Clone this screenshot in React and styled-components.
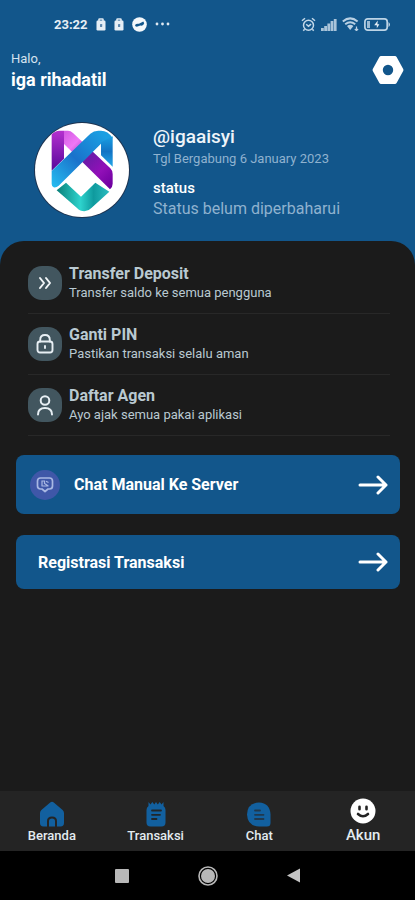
import React from 'react';
import styled, { createGlobalStyle } from 'styled-components';

const menus = [
  { id: 'transfer', title: 'Transfer Deposit', desc: 'Transfer saldo ke semua pengguna', icon: <DoubleChevron /> },
  { id: 'pin', title: 'Ganti PIN', desc: 'Pastikan transaksi selalu aman', icon: <Lock /> },
  { id: 'agen', title: 'Daftar Agen', desc: 'Ayo ajak semua pakai aplikasi', icon: <Person /> },
];

const tabs = [
  { id: 'beranda', label: 'Beranda', icon: <HomeIcon /> },
  { id: 'transaksi', label: 'Transaksi', icon: <NoteIcon /> },
  { id: 'chat', label: 'Chat', icon: <ChatIcon /> },
  { id: 'akun', label: 'Akun', icon: <SmileIcon />, active: true },
];

const App = () => {
  return (
    <Page>
      <GlobalStyle />
      <StatusBar>
        <StatusGroup>
          <Clock>23:22</Clock>
          <BagIcon />
          <BagIcon />
          <RoundBadge />
          <Dots />
        </StatusGroup>
        <DeviceGroup>
          <AlarmIcon />
          <SignalIcon />
          <WifiIcon />
          <BatteryIcon />
        </DeviceGroup>
      </StatusBar>

      <Header>
        <div>
          <Greeting>Halo,</Greeting>
          <UserName>iga rihadatil</UserName>
        </div>
        <IconButton type="button" aria-label="Pengaturan">
          <HexNut />
        </IconButton>
      </Header>

      <Profile>
        <Avatar>
          <Logo />
        </Avatar>
        <ProfileInfo>
          <Handle>@igaaisyi</Handle>
          <Joined>Tgl Bergabung 6 January 2023</Joined>
          <StatusLabel>status</StatusLabel>
          <StatusText>Status belum diperbaharui</StatusText>
        </ProfileInfo>
      </Profile>

      <Panel>
        <MenuList>
          {menus.map((menu) => (
            <MenuItem key={menu.id}>
              <MenuLink href={`#${menu.id}`}>
                <MenuIcon>{menu.icon}</MenuIcon>
                <div>
                  <MenuTitle>{menu.title}</MenuTitle>
                  <MenuDesc>{menu.desc}</MenuDesc>
                </div>
              </MenuLink>
            </MenuItem>
          ))}
        </MenuList>

        <Actions>
          <ActionButton type="button" $tall>
            <ServerIcon />
            <ActionLabel>Chat Manual Ke Server</ActionLabel>
            <Arrow />
          </ActionButton>
          <ActionButton type="button">
            <ActionLabel>Registrasi Transaksi</ActionLabel>
            <Arrow />
          </ActionButton>
        </Actions>
      </Panel>

      <BottomNav>
        {tabs.map((tab) => (
          <Tab key={tab.id} href={`#${tab.id}`} $active={tab.active}>
            {tab.icon}
            {tab.label}
          </Tab>
        ))}
      </BottomNav>

      <SystemNav>
        <SystemButton type="button" aria-label="Aplikasi terbaru">
          <svg width="14" height="14"><rect width="14" height="14" rx="1" fill="#b8b8b8" /></svg>
        </SystemButton>
        <SystemButton type="button" aria-label="Layar utama">
          <svg width="20" height="20" viewBox="0 0 20 20">
            <circle cx="10" cy="10" r="9" fill="none" stroke="#b8b8b8" strokeWidth="1.6" />
            <circle cx="10" cy="10" r="7" fill="#b8b8b8" />
          </svg>
        </SystemButton>
        <SystemButton type="button" aria-label="Kembali">
          <svg width="13" height="15" viewBox="0 0 13 15"><path d="M13 .5v14L0 7.5z" fill="#c4c4c4" /></svg>
        </SystemButton>
      </SystemNav>
    </Page>
  );
};

export default App;

function BagIcon() {
  return (
    <svg width="10" height="13" viewBox="0 0 10 13">
      <path d="M3 3V1.6Q3 1 3.6 1h2.8Q7 1 7 1.600V3" fill="none" stroke="#dfe9f2" strokeWidth="1.600" />
      <rect x=".5" y="2.500" width="9" height="10" rx="1.200" fill="#e6eef5" />
      <rect x="4" y="6" width="2.200" height="3" rx=".6" fill="#5d88ae" />
    </svg>
  );
}

function RoundBadge() {
  return (
    <svg width="15" height="15" viewBox="0 0 15 15">
      <circle cx="7.500" cy="7.500" r="7.300" fill="#f4f8fb" />
      <path d="M3 8q1.500-1.800 4-1.200l4.300-2.200.9 1.600q-.8 3-3.800 2.300l-3.600 1.300Q3 9.800 3 8z" fill="#12568b" />
    </svg>
  );
}

function Dots() {
  return (
    <svg width="15" height="4" viewBox="0 0 15 4" fill="#dfe9f2">
      <circle cx="2" cy="2" r="1.400" />
      <circle cx="7.500" cy="2" r="1.400" />
      <circle cx="13" cy="2" r="1.400" />
    </svg>
  );
}

function AlarmIcon() {
  return (
    <svg width="15" height="15" viewBox="0 0 15 15" fill="none" stroke="#c3d8e9" strokeWidth="1.500">
      <circle cx="7.500" cy="8.200" r="5" />
      <path d="M5.200 7.200l2.300 2 2.600-2M1 3.800L4 1.200M14 3.800l-3-2.600M3.600 12.200l-1.300 1.500M11.400 12.200l1.300 1.500" />
    </svg>
  );
}

function SignalIcon() {
  return (
    <svg width="16" height="13" viewBox="0 0 16 13" fill="#a9c4da">
      <rect x="0" y="10" width="2.800" height="3" />
      <rect x="3.200" y="8" width="2.800" height="5" />
      <rect x="6.400" y="5.500" width="2.800" height="7.500" />
      <rect x="9.600" y="3" width="2.800" height="10" />
      <rect x="12.800" y="1" width="2.800" height="12" />
    </svg>
  );
}

function WifiIcon() {
  return (
    <svg width="17" height="14" viewBox="0 0 17 14" fill="none" stroke="#b9d0e3" strokeWidth="2">
      <path d="M.8 4.500q7.400-6.200 14.800 0M3.200 7.200q5-4 10 0" />
      <path d="M5 9q3.200-2.500 6.400 0l-3.200 4z" fill="#b9d0e3" stroke="none" />
      <path d="M14.500 9.500v4M12.800 12l1.700 1.600 1.600-1.600" strokeWidth="1.200" />
    </svg>
  );
}

function BatteryIcon() {
  return (
    <svg width="26" height="13" viewBox="0 0 26 13">
      <rect x=".9" y=".9" width="22.300" height="11.200" rx="2.800" fill="none" stroke="#bdd4e6" strokeWidth="1.700" />
      <rect x="3" y="3" width="3" height="7" fill="#9dbcd5" />
      <path d="M24.500 4v5q1.500-1 1.500-2.500T24.500 4z" fill="#bdd4e6" />
      <path d="M13.800 2.500l-3.600 4.800h2.600v3l2.600-4h-2z" fill="#e6eef5" />
    </svg>
  );
}

function HexNut() {
  return (
    <svg width="32" height="30" viewBox="0 0 32 30">
      <path
        d="M9 1h14q1 0 1.600 1l6.600 12q.5 1 0 2l-6.600 12q-.6 1-1.600 1H9q-1 0-1.600-1L.8 16q-.5-1 0-2L7.400 2q.6-1 1.600-1zM16 9.800a5.200 5.200 0 1 0 0 10.400 5.200 5.200 0 1 0 0-10.400z"
        fill="#fff"
        fillRule="evenodd"
      />
    </svg>
  );
}

// interlocking ribbon mark
function Logo() {
  return (
    <svg width="94" height="94" viewBox="45 40 282 282" role="img" aria-label="Logo">
      <defs>
        <linearGradient id="violet" x1="0" y1="0" x2="0" y2="1">
          <stop offset="0" stopColor="#b530cf" />
          <stop offset="1" stopColor="#56089a" />
        </linearGradient>
        <linearGradient id="pink" gradientUnits="userSpaceOnUse" x1="125" y1="75" x2="275" y2="225">
          <stop offset="0" stopColor="#d45be4" />
          <stop offset=".22" stopColor="#ee78f6" />
          <stop offset=".5" stopColor="#6d1aa8" />
          <stop offset=".75" stopColor="#9210b8" />
          <stop offset="1" stopColor="#6f00a0" />
        </linearGradient>
        <linearGradient id="blue" gradientUnits="userSpaceOnUse" x1="95" y1="230" x2="250" y2="75">
          <stop offset="0" stopColor="#25bdf0" />
          <stop offset=".5" stopColor="#1a72cb" />
          <stop offset="1" stopColor="#1a9fe2" />
        </linearGradient>
        <linearGradient id="fold" x1="0" y1="0" x2="0" y2="1">
          <stop offset="0" stopColor="#1a9fe2" />
          <stop offset=".5" stopColor="#1273c4" />
          <stop offset="1" stopColor="#22a6e8" />
        </linearGradient>
        <linearGradient id="teal" x1="0" y1="0" x2="1" y2="0">
          <stop offset="0" stopColor="#087f78" />
          <stop offset=".45" stopColor="#2ed3cd" />
          <stop offset=".7" stopColor="#0f9a9e" />
          <stop offset="1" stopColor="#2bbdc0" />
        </linearGradient>
      </defs>
      <path d="M95 74q10-11 24-11h13v84l-37 36z" fill="url(#violet)" />
      <path d="M132 63h12q8 0 15 7l112 106q7 7 7 17v29q0 10-8 17L132 103z" fill="url(#pink)" />
      <path
        d="M95 184L211 72q10-9 24-9h8q21 0 35 22l-35 17L116 228q-8 7-15 5-6-2-6-10z"
        fill="url(#blue)"
      />
      <path d="M243 98l35-18v91l-35-34z" fill="url(#fold)" />
      <path d="M110 242l28-23 45 42 43-42 42 27-53 48q-9 10-22 11-13 0-22-10z" fill="url(#teal)" />
    </svg>
  );
}

function DoubleChevron() {
  return (
    <svg width="14" height="14" viewBox="0 0 14 14" fill="none" stroke="#f2f6f8" strokeWidth="2" strokeLinecap="round" strokeLinejoin="round">
      <path d="M2 2l4 5-4 5M8 2l4 5-4 5" />
    </svg>
  );
}

function Lock() {
  return (
    <svg width="18" height="20" viewBox="0 0 18 20" fill="none" stroke="#e8eff4" strokeWidth="1.900" strokeLinecap="round">
      <rect x="1.500" y="7.500" width="15" height="11" rx="2.500" />
      <path d="M4.200 7.500V6q0-5 4.800-5t4.800 5v1.500M9 12v2" />
    </svg>
  );
}

function Person() {
  return (
    <svg width="16" height="21" viewBox="0 0 16 21" fill="none" stroke="#e8eff4" strokeWidth="2" strokeLinecap="round">
      <circle cx="8" cy="5.500" r="4.300" />
      <path d="M1 19.500q0-6.500 7-6.500t7 6.500" />
    </svg>
  );
}

function ServerIcon() {
  return (
    <svg width="30" height="30" viewBox="0 0 30 30">
      <circle cx="15" cy="15" r="15" fill="#3f57a8" />
      <path
        d="M10.500 8h9q3 0 3 3v5q0 3-3 3h-1.500L15 21.500 12 19h-1.500q-3 0-3-3v-5q0-3 3-3z"
        fill="none"
        stroke="#a9b8e3"
        strokeWidth="1.700"
        strokeLinejoin="round"
      />
      <path d="M12 16v-5h2.500v2.500l3.800 2.500M16 11.200l2.500 1.300M11.500 16h7" fill="none" stroke="#a9b8e3" strokeWidth="1.200" />
    </svg>
  );
}

function Arrow() {
  return (
    <svg width="30" height="20" viewBox="0 0 30 20" fill="none" stroke="#fff" strokeWidth="3" strokeLinecap="round" strokeLinejoin="round">
      <path d="M2 10h26M20 2l8 8-8 8" />
    </svg>
  );
}

function HomeIcon() {
  return (
    <svg width="26" height="26" viewBox="0 0 26 26">
      <path
        d="M11.200 1.500q1.800-1.400 3.600 0l8.800 7.600q1.400 1.300 1.400 3v10q0 3.400-3.400 3.400H18v-5.500q0-4.500-5-4.500t-5 4.500v5.500H4.400Q1 25.500 1 22.100v-10q0-1.700 1.400-3z"
        fill="#12609f"
      />
      <path d="M10 25.500V20q0-2.500 3-2.500t3 2.500v5.500z" fill="#12609f" />
    </svg>
  );
}

function NoteIcon() {
  return (
    <svg width="26" height="26" viewBox="0 0 26 26">
      <path
        d="M5.500 1l2 2.500L9.300 1l2 2.500L13 1l1.800 2.500L16.700 1l1.800 2.500L20.500 1v4q2 1.500 2 4v12.500q0 4-4 4h-11q-4 0-4-4V9q0-2.500 2-4z"
        fill="#12609f"
      />
      <path d="M9 9.500h9M9 13.800h8M9 18h4.500" stroke="#20262b" strokeWidth="1.800" strokeLinecap="round" />
    </svg>
  );
}

function ChatIcon() {
  return (
    <svg width="26" height="26" viewBox="0 0 26 26">
      <path d="M13 1.500q11 .5 11.500 12V22q0 3.500-3.500 3.500h-8Q1.500 25 1 13.500 1.500 2 13 1.500z" fill="#12609f" />
      <path d="M9 9.500h5M9 13.800h8.500M9 18h8.500" stroke="#20384d" strokeWidth="1.800" strokeLinecap="round" />
    </svg>
  );
}

function SmileIcon() {
  return (
    <svg width="26" height="26" viewBox="0 0 26 26">
      <circle cx="13" cy="13" r="12.500" fill="#fff" />
      <path d="M9.500 8.800v2.400M16.500 8.800v2.400" stroke="#222" strokeWidth="2.600" strokeLinecap="round" />
      <path d="M8 16q5 4.500 10 0" fill="none" stroke="#222" strokeWidth="2.600" strokeLinecap="round" />
    </svg>
  );
}

const GlobalStyle = createGlobalStyle`
  * {
    box-sizing: border-box;
  }

  body {
    margin: 0;
    background: #12568b;
    font-family: Roboto, "Liberation Sans", sans-serif;
  }

  svg {
    display: block;
    flex-shrink: 0;
  }

  p, h1, h2, h3, ul {
    margin: 0;
    padding: 0;
  }
`;

const Page = styled.div`
  display: flex;
  flex-direction: column;
  min-height: 100vh;
  background: #12568b;
  color: #fff;
`;

const StatusBar = styled.div`
  display: flex;
  align-items: center;
  justify-content: space-between;
  height: 48px;
  padding: 0 25px 0 54px;
`;

const StatusGroup = styled.div`
  display: flex;
  align-items: center;
  gap: 8px;
`;

const DeviceGroup = styled(StatusGroup)`
  gap: 5px;
`;

const Clock = styled.span`
  font-size: 13px;
  font-weight: 700;
  color: #e6eef5;
`;

const Header = styled.header`
  display: flex;
  align-items: center;
  justify-content: space-between;
  height: 44px;
  padding: 0 11px;
`;

const Greeting = styled.p`
  font-size: 13px;
  line-height: 20px;
  color: #d5e3ef;
`;

const UserName = styled.h1`
  font-size: 18px;
  line-height: 22px;
  font-weight: 700;
`;

const IconButton = styled.button`
  padding: 0;
  border: 0;
  background: none;
  cursor: pointer;
`;

const Profile = styled.section`
  display: flex;
  align-items: flex-start;
  gap: 24px;
  padding: 31px 16px 21px 35px;
`;

const Avatar = styled.div`
  width: 94px;
  height: 94px;
  flex-shrink: 0;
  border-radius: 50%;
  overflow: hidden;
  background: #fff;
  box-shadow: 0 0 0 1px #1d3350;
`;

const ProfileInfo = styled.div`
  display: flex;
  flex-direction: column;
  padding-top: 2px;
`;

const Handle = styled.h2`
  font-size: 19px;
  line-height: 24px;
  font-weight: 500;
  color: #eef4f9;
`;

const Joined = styled.p`
  margin-bottom: 9px;
  font-size: 13px;
  line-height: 20px;
  color: #8fb2cf;
`;

const StatusLabel = styled.h3`
  font-size: 15px;
  line-height: 20px;
  font-weight: 500;
`;

const StatusText = styled.p`
  font-size: 16px;
  line-height: 22px;
  color: #8fb2cf;
`;

const Panel = styled.main`
  flex: 1;
  padding: 12px 15px 16px 16px;
  border-radius: 24px 24px 0 0;
  background: #1b1b1b;
`;

const MenuList = styled.ul`
  padding: 0 10px 0 12px;
  list-style: none;
`;

const MenuItem = styled.li`
  border-bottom: 1px solid #282828;
`;

const MenuLink = styled.a`
  display: flex;
  align-items: center;
  gap: 7px;
  height: 60px;
  color: #b9c9d1;
  text-decoration: none;
`;

const MenuIcon = styled.span`
  display: flex;
  align-items: center;
  justify-content: center;
  width: 34px;
  height: 34px;
  border-radius: 14px;
  background: #42565f;
`;

const MenuTitle = styled.h3`
  font-size: 16px;
  line-height: 20px;
  font-weight: 700;
`;

const MenuDesc = styled.p`
  font-size: 13px;
  line-height: 18px;
`;

const Actions = styled.div`
  display: flex;
  flex-direction: column;
  gap: 21px;
  padding-top: 19px;
`;

const ActionButton = styled.button`
  display: flex;
  align-items: center;
  gap: 14px;
  width: 100%;
  height: ${({ $tall }) => ($tall ? '59px' : '54px')};
  padding: ${({ $tall }) => ($tall ? '0 12px 0 14px' : '0 12px 0 22px')};
  border: 0;
  border-radius: 8px;
  background: #12568b;
  color: #fff;
  font-family: inherit;
  cursor: pointer;
`;

const ActionLabel = styled.span`
  flex: 1;
  font-size: 16px;
  font-weight: 700;
  text-align: left;
`;

const BottomNav = styled.nav`
  display: grid;
  grid-template-columns: repeat(4, 1fr);
  height: 60px;
  background: #242424;
`;

const Tab = styled.a`
  display: flex;
  flex-direction: column;
  align-items: center;
  justify-content: center;
  gap: ${({ $active }) => ($active ? '2px' : '0')};
  padding-top: ${({ $active }) => ($active ? '0' : '4px')};
  font-size: ${({ $active }) => ($active ? '15px' : '13px')};
  line-height: 18px;
  font-weight: 500;
  color: #e3ebf0;
  text-decoration: none;
`;

const SystemNav = styled.div`
  display: flex;
  align-items: center;
  justify-content: center;
  gap: 42px;
  height: 49px;
  background: #000;
`;

const SystemButton = styled(IconButton)`
  display: flex;
  align-items: center;
  justify-content: center;
  width: 44px;
  height: 100%;
`;
